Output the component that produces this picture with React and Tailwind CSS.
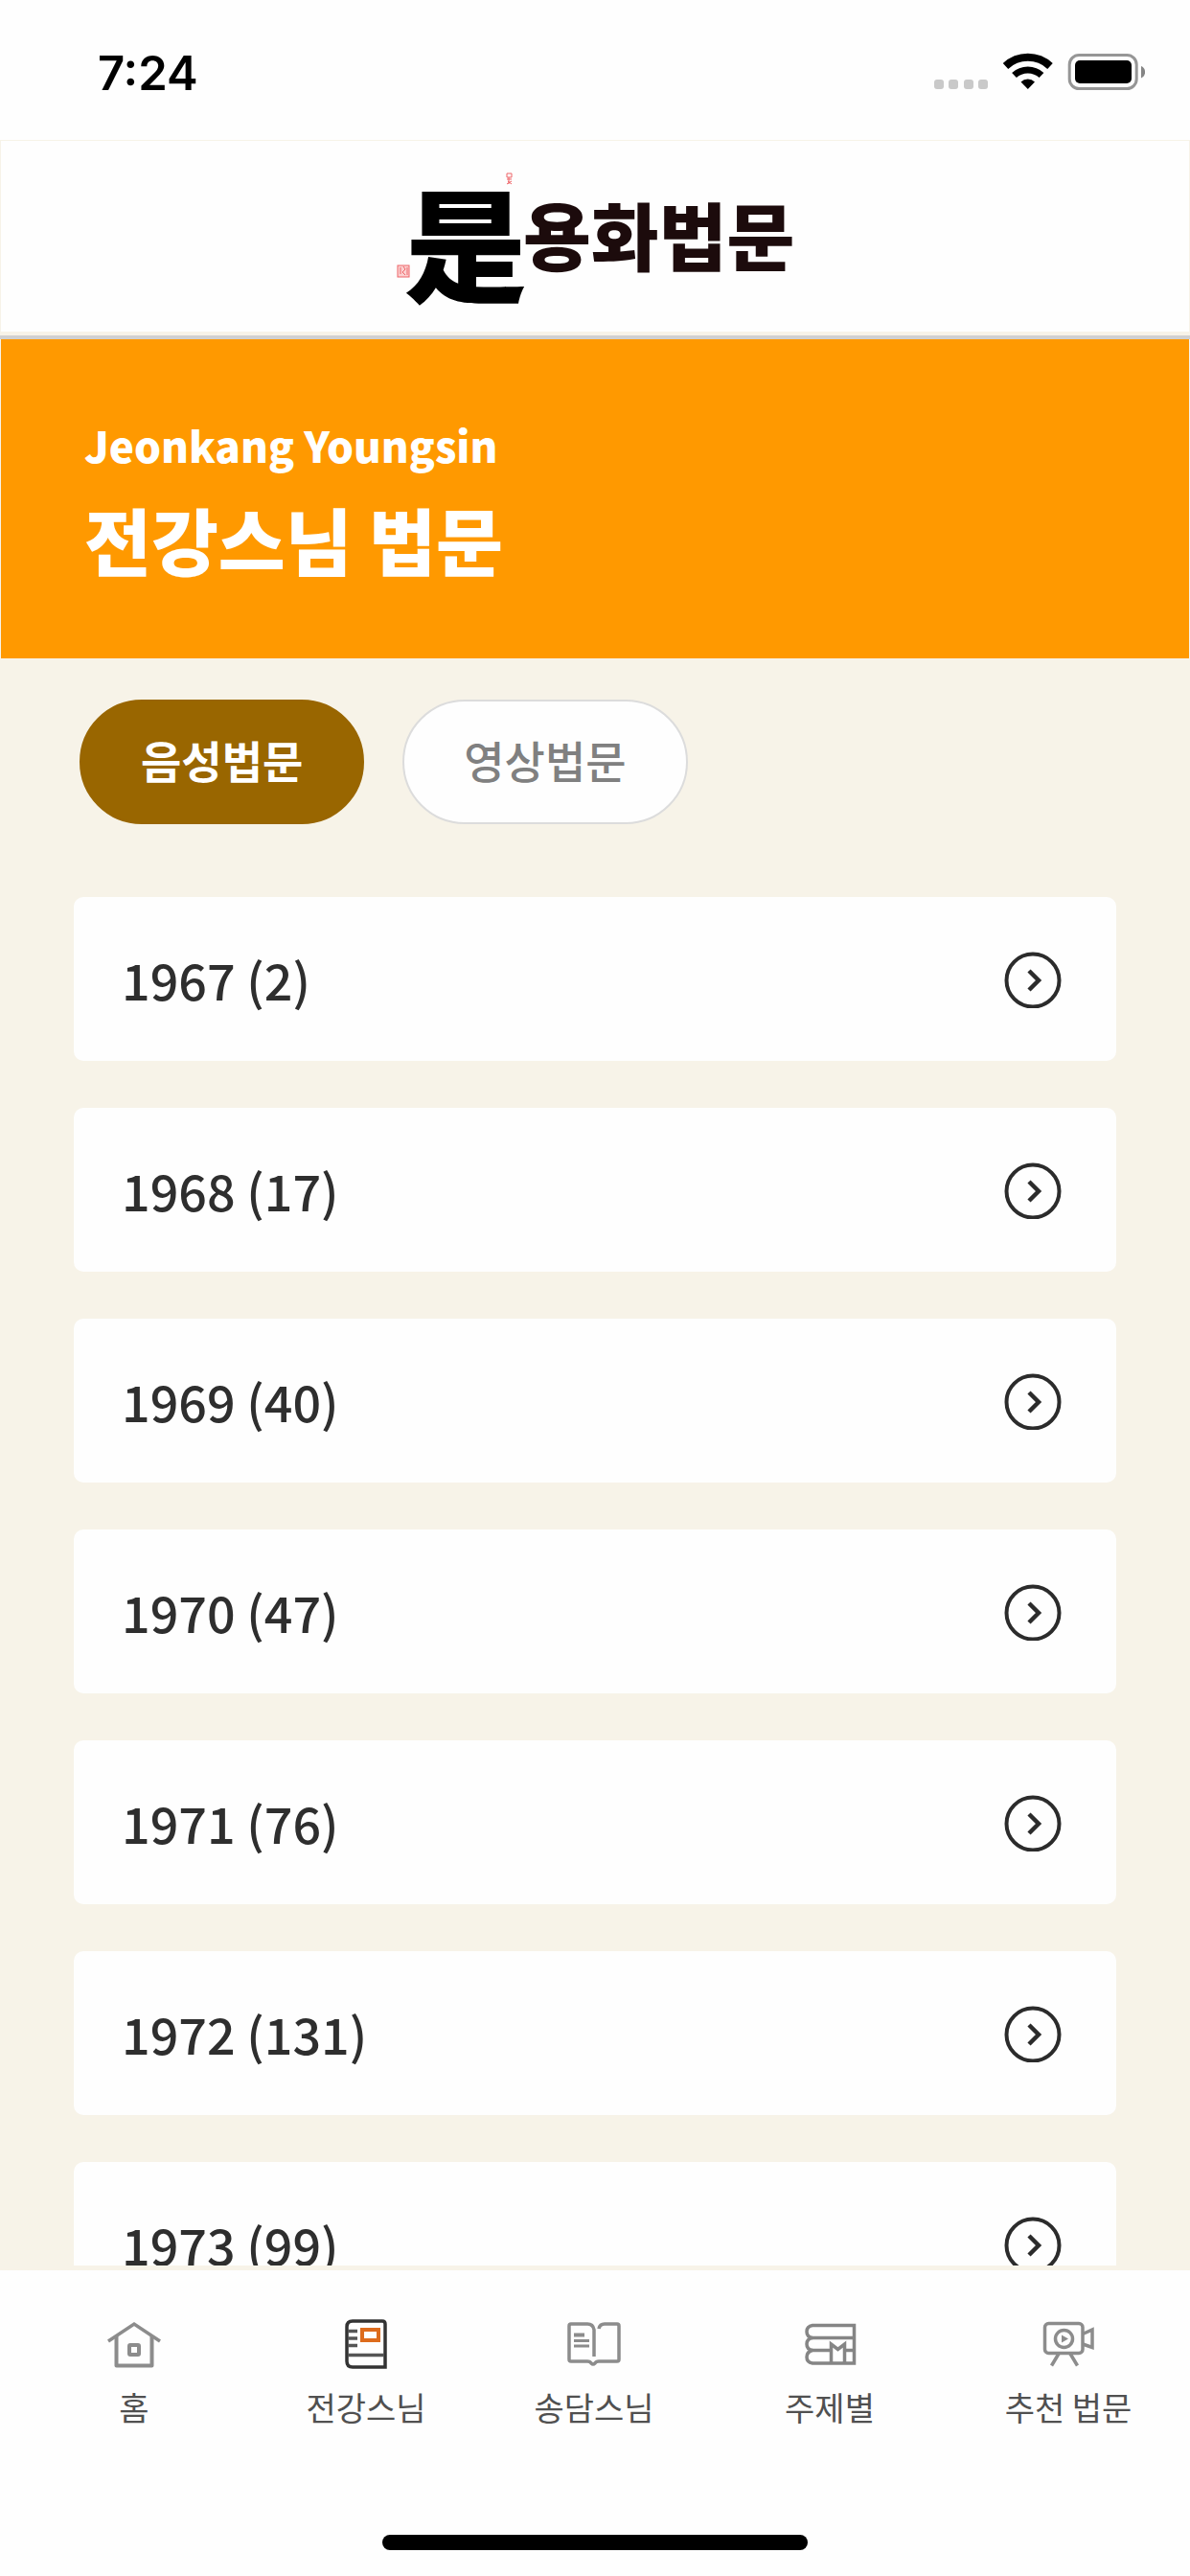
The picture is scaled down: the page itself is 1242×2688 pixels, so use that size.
import React, { useState } from 'react';

const years = [
  { year: 1967, count: 2 },
  { year: 1968, count: 17 },
  { year: 1969, count: 40 },
  { year: 1970, count: 47 },
  { year: 1971, count: 76 },
  { year: 1972, count: 131 },
  { year: 1973, count: 99 },
];

const tabs = ['음성법문', '영상법문'];

function StatusBar() {
  return (
    <div className="flex h-[146px] shrink-0 items-center justify-between pt-1 pr-[47px] pl-[102px]">
      <span className="pt-1 font-['Inter',sans-serif] text-[49px] leading-[60px] font-semibold text-black">7:24</span>
      <svg className="h-10 w-[222px]" viewBox="0 0 222 40" fill="none">
        <g fill="#c9c9c9">
          <rect x="2" y="28" width="10" height="10" rx="3" />
          <rect x="17" y="28" width="10" height="10" rx="3" />
          <rect x="33" y="28" width="10" height="10" rx="3" />
          <rect x="48" y="28" width="10" height="10" rx="3" />
        </g>
        {/* Wifi */}
        <path d="M76.500 14a34 34 0 0 1 46.500 0" stroke="#000" strokeWidth="8" />
        <path d="M85.500 23.500a21 21 0 0 1 28.500 0" stroke="#000" strokeWidth="7" />
        <path d="M92.500 30.500a10.500 10.500 0 0 1 14.500 0l-7.200 7.500z" fill="#000" />
        {/* Battery */}
        <rect x="143.200" y="2.500" width="70" height="35" rx="10" stroke="#969696" strokeWidth="3" />
        <rect x="149" y="8" width="59" height="24" rx="5" fill="#000" />
        <path d="M218 14c5.500 2 5.500 10.500 0 12.500z" fill="#858585" />
      </svg>
    </div>
  );
}

function Logo() {
  return (
    <svg className="h-[150px] w-[414px] overflow-visible" viewBox="0 0 414 150" role="img" aria-label="용화법문">
      {/* Red seals */}
      <rect x="1" y="105" width="12" height="12" fill="#fbd0d0" stroke="#ee6468" />
      <path d="M4 107v7M7 106l2 3-3 3 3 3M11 107v8" stroke="#ee6468" fill="none" />
      <path d="M115 9h5v4h-5zM115 15h5M117 13v7M115 20l5-3M116 17l4 3" stroke="#ee6468" fill="none" />
      <text
        x="8"
        y="134"
        fill="#000"
        className="font-['Noto_Sans_CJK_KR','Noto_Sans_CJK_SC',sans-serif] text-[128px] font-black"
      >
        是
      </text>
      <text x="132" y="105" fill="#1c0b0c" className="font-['Noto_Sans_CJK_KR',sans-serif] text-[77px] font-black">
        용화법문
      </text>
    </svg>
  );
}

function ArrowIcon() {
  return (
    <svg className="size-[60px]" viewBox="0 0 60 60" fill="none" stroke="#2b2b2b" strokeWidth="4">
      <circle cx="30" cy="31" r="27.500" />
      <path d="M26 21 36 31 26 41" strokeWidth="4.500" />
    </svg>
  );
}

function HomeIcon() {
  return (
    <svg className="size-14" viewBox="0 0 56 56" fill="none" stroke="#8c8c8c" strokeWidth="3.500">
      <path d="M1 25 28 7l27 18" />
      <path d="M9.500 19v31.500h37V19" strokeLinejoin="round" strokeWidth="4" />
      <rect x="23" y="29" width="10" height="10" rx="1" strokeWidth="4" />
    </svg>
  );
}

function NotebookIcon() {
  return (
    <svg className="size-14" viewBox="0 0 56 56" fill="none" stroke="#333" strokeWidth="3.500">
      <path d="M14 4h31q3 0 3 3v45H14q-6 0-6-6V10q0-6 6-6z" />
      <path d="M9 39.500h38" stroke="#555" />
      <path d="M9 14.500h10M9 22h10M9 29.500h10" stroke="#555" />
      <rect x="24" y="13" width="17" height="11" stroke="#dd6b1c" strokeWidth="4" />
    </svg>
  );
}

function OpenBookIcon() {
  return (
    <svg className="size-14" viewBox="0 0 56 56" fill="none" stroke="#8c8c8c" strokeWidth="3.500">
      <path d="M28 41V13q-1-6-7-6H4q-2 0-2 2v35q0 2 2 2h17q3 0 4 2 2 2 4 0 1-2 4-2h19q2 0 2-2V9q0-2-2-2H39q-5 0-6 5" />
      <path d="M7 18.500h11" strokeWidth="4" />
      <path d="M7 24.500h16M7 30h16" strokeWidth="3" />
    </svg>
  );
}

function BookStackIcon() {
  return (
    <svg className="size-14" viewBox="0 0 56 56" fill="none" stroke="#858585" strokeWidth="3.500">
      <path d="M54 21.500H10q-6-1-6-6.500t6-6.500h43.500V48H10q-6-1-6-6.500t6-7h18" />
      <path d="M10 21.500q-6 1-6 6.500t6 6.500M43 34.500h10" />
      <path d="M29.500 48V28l7 5.500 7-5.500v20" />
    </svg>
  );
}

function CameraIcon() {
  return (
    <svg className="size-14" viewBox="0 0 56 56" fill="none" stroke="#8c8c8c" strokeWidth="3.500">
      <rect x="3.500" y="6.500" width="39.500" height="31" rx="4" />
      <circle cx="23.500" cy="22.500" r="9" />
      <path d="M21 18.500v8l7-4z" fill="#8c8c8c" stroke="none" />
      <path d="M43 17.500 53 13v18.500L43 28M18 38l-7.500 12.500M30 38l7.500 12.500" />
    </svg>
  );
}

const menus = [
  { label: '홈', icon: HomeIcon },
  { label: '전강스님', icon: NotebookIcon },
  { label: '송담스님', icon: OpenBookIcon },
  { label: '주제별', icon: BookStackIcon },
  { label: '추천 법문', icon: CameraIcon },
];

function BottomNav() {
  return (
    <nav className="shrink-0 border-t-[5px] border-[#f7f3e8] bg-[#fefefe]">
      <div className="grid grid-cols-[244fr_240fr_236fr_256fr_242fr] pt-[49px] pr-1.5 pl-[18px]">
        {menus.map(({ label, icon: Icon }) => (
          <a key={label} href="#" className="flex flex-col items-center gap-[18px] text-[34px] leading-10 text-[#505050]">
            <Icon />
            {label}
          </a>
        ))}
      </div>
      {/* Home indicator */}
      <div className="mx-auto mt-[113px] mb-[27px] h-4 w-[444px] rounded-full bg-black" />
    </nav>
  );
}

function App() {
  const [activeTab, setActiveTab] = useState(tabs[0]);

  return (
    <div className="flex h-screen flex-col bg-[#fefefe] font-['Noto_Sans_CJK_KR',sans-serif]">
      <StatusBar />

      {/* Header */}
      <header className="flex h-[204px] shrink-0 items-center justify-center border-x border-t border-b-4 border-[#f7f3e8]">
        <a href="#">
          <Logo />
        </a>
      </header>

      {/* Banner */}
      <section className="shrink-0 border-t-4 border-[#d0d0d0] bg-[#f7f3e8] px-px">
        <div className="bg-[#ff9900] px-[87px] pt-20 pb-[75px] text-white">
          <p className="text-[44px] leading-[60px] font-black">Jeonkang Youngsin</p>
          <h1 className="mt-[18px] text-[76px] leading-[100px] font-black">전강스님 법문</h1>
        </div>
      </section>

      {/* Content */}
      <main className="min-h-0 flex-1 overflow-y-auto bg-[#f7f3e8] [scrollbar-width:none]">
        <div className="flex gap-10 px-[83px] pt-[43px]">
          {tabs.map((tab) => (
            <button
              key={tab}
              type="button"
              onClick={() => setActiveTab(tab)}
              className={
                tab === activeTab
                  ? 'h-[130px] rounded-full border-2 border-[#996600] bg-[#996600] px-[62px] pb-1.5 text-[46px] font-bold text-white'
                  : 'h-[130px] rounded-full border-2 border-[#dcdcdc] bg-[#fefefe] px-[62px] pb-1.5 text-[46px] font-medium text-[#808080]'
              }
            >
              {tab}
            </button>
          ))}
        </div>

        <ul className="mt-[76px] flex flex-col gap-[49px] px-[77px] pb-12">
          {years.map(({ year, count }) => (
            <li key={year}>
              <a
                href="#"
                className="flex h-[171px] items-center justify-between rounded-[10px] bg-[#fefefe] pr-[57px] pl-[50px] text-[52px] font-medium text-[#2e2e2e]"
              >
                <span>
                  {year} ({count})
                </span>
                <ArrowIcon />
              </a>
            </li>
          ))}
        </ul>
      </main>

      <BottomNav />
    </div>
  );
}

export default App;
